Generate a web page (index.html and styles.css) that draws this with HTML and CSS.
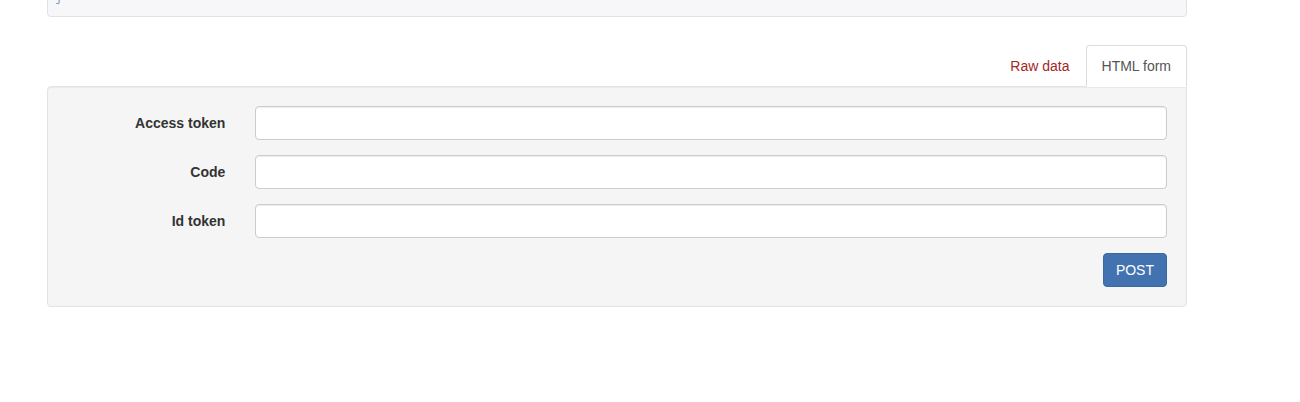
FILE: index.html
```html
<!DOCTYPE html>
<html>
<head>
<meta charset="utf-8">
<link rel="stylesheet" href="styles.css">
</head>
<body>
<div class="content">
  <pre class="response">}</pre>
  <div class="tabbable">
    <ul class="nav-tabs">
      <li class="tab"><a class="tab-link">Raw data</a></li>
      <li class="tab active"><a class="tab-link">HTML form</a></li>
    </ul>
    <div class="well">
      <form class="form-horizontal">
        <div class="form-group">
          <label class="control-label">Access token</label>
          <div class="control"><input class="form-control" type="text"></div>
        </div>
        <div class="form-group">
          <label class="control-label">Code</label>
          <div class="control"><input class="form-control" type="text"></div>
        </div>
        <div class="form-group">
          <label class="control-label">Id token</label>
          <div class="control"><input class="form-control" type="text"></div>
        </div>
        <div class="form-actions">
          <button class="btn-primary" type="button">POST</button>
        </div>
      </form>
    </div>
  </div>
</div>
</body>
</html>
```
FILE: styles.css
```css
* { box-sizing: border-box; }
html, body { margin: 0; padding: 0; background: #fff; }
body {
  font-family: "Liberation Sans", Arial, Helvetica, sans-serif;
  font-size: 14px;
  line-height: 20px;
  color: #333;
  overflow: hidden;
}
.content {
  margin-left: 47px;
  width: 1140px;
}
.response {
  margin: -22px 0 0 0;
  padding: 9.5px 9.5px 9.5px 7px;
  font-family: "Liberation Mono", "DejaVu Sans Mono", monospace;
  font-size: 13px;
  line-height: 18px;
  color: #7f9cc4;
  background: #f7f7f9;
  border: 1px solid #e1e1e8;
  border-radius: 4px;
}
.tabbable { margin-top: 28px; }
.nav-tabs {
  list-style: none;
  margin: 0;
  padding: 0;
  display: flex;
  justify-content: flex-end;
  position: relative;
  z-index: 1;
}
.tab { margin-bottom: -1px; }
.tab-link {
  display: block;
  padding: 10px 15px;
  line-height: 20px;
  border: 1px solid transparent;
  border-radius: 4px 4px 0 0;
  color: #a52626;
  cursor: pointer;
}
.tab.active .tab-link {
  background: #fff;
  color: #555;
  border-color: #ddd #ddd transparent #ddd;
}
.well {
  padding: 19px;
  background: #f5f5f5;
  border: 1px solid #e3e3e3;
  border-radius: 4px;
  border-top-right-radius: 0;
  box-shadow: inset 0 1px 1px rgba(0,0,0,.05);
}
.form-group {
  display: flex;
  margin: 0 -15px 15px;
}
.control-label {
  width: 16.66667%;
  padding: 7px 15px 0;
  text-align: right;
  font-weight: bold;
  color: #333;
}
.control {
  width: 83.33333%;
  padding: 0 15px;
}
.form-control {
  display: block;
  width: 100%;
  height: 34px;
  padding: 6px 12px;
  font: inherit;
  color: #555;
  background: #fff;
  border: 1px solid #ccc;
  border-radius: 4px;
  box-shadow: inset 0 1px 1px rgba(0,0,0,.075);
}
.form-actions {
  display: flex;
  justify-content: flex-end;
}
.btn-primary {
  font-family: inherit;
  font-size: 14px;
  line-height: 20px;
  padding: 6px 12px;
  color: #fff;
  background: #4273b0;
  border: 1px solid #3a68a3;
  border-radius: 4px;
}
```
